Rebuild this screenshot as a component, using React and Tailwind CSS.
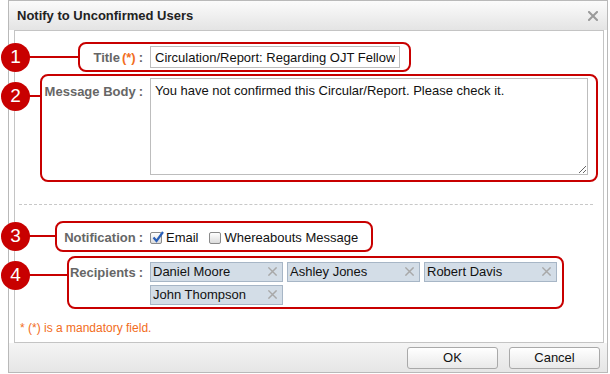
import React from 'react'

const recipients = ['Daniel Moore', 'Ashley Jones', 'Robert Davis', 'John Thompson']

function CloseIcon({ size = 10, color = '#9a9a9a', width = 2 }) {
  return (
    <svg width={size} height={size} viewBox="0 0 10 10">
      <path d="M1 1L9 9M9 1L1 9" stroke={color} strokeWidth={width} strokeLinecap="square" />
    </svg>
  )
}

function Tag({ name }) {
  return (
    <div className="flex h-[20px] w-[133px] items-center justify-between border border-[#a7b6c6] bg-[#d3dde7] pl-[2px] pr-[5px] text-[13px] text-[#111]">
      <span>{name}</span>
      <CloseIcon size={9} color="#a8a8a8" width={1.6} />
    </div>
  )
}

function Checkbox({ checked }) {
  return (
    <span className="relative inline-flex h-[12px] w-[12px] items-center justify-center rounded-[2px] border border-[#8a8a8a] bg-gradient-to-b from-white to-[#dcdcdc]">
      {checked && (
        <svg className="absolute -top-[3px] left-[0px]" width="14" height="14" viewBox="0 0 14 14">
          <path d="M2.5 7.5L5.5 11L12 2" fill="none" stroke="#2a5fb8" strokeWidth="2.2" />
        </svg>
      )}
    </span>
  )
}

function Label({ children, className = '' }) {
  return (
    <div className={`text-right text-[13px] font-bold text-[#666] ${className}`}>
      {children}
      <span className="ml-[3px]">:</span>
    </div>
  )
}

function Marker({ n, top }) {
  return (
    <div
      className="absolute left-[1px] flex h-[29px] w-[29px] items-center justify-center rounded-full bg-[#c80000] text-[19px] text-white"
      style={{ top }}
    >
      {n}
    </div>
  )
}

export default function App() {
  return (
    <div className="relative h-[374px] w-[610px] overflow-hidden bg-white [font-family:'Liberation_Sans',Arial,sans-serif]">
      {/* Dialog */}
      <div className="ml-[8px] flex h-[373px] w-[600px] flex-col border border-[#b9b9b9] bg-white">
        <div className="flex h-[29px] items-center justify-between bg-gradient-to-b from-[#fbfbfb] to-[#e4e4e4] pl-[8px] pr-[9px]">
          <span className="text-[13px] font-bold text-[#222]">Notify to Unconfirmed Users</span>
          <CloseIcon size={10} />
        </div>

        <div className="ml-[5px] flex h-[313px] w-[590px] flex-col border border-[#c4c4c4] bg-white pl-[4px] pt-[15px]">
          <div className="grid grid-cols-[124px_1fr] gap-x-[7px] gap-y-[10px]">
            <Label className="pt-[2px]">
              Title<span className="ml-[2px] text-[#f26d21]">(*)</span>
            </Label>
            <input
              readOnly
              value="Circulation/Report: Regarding OJT Fellows"
              className="h-[22px] w-[250px] border border-[#bdbdbd] px-[4px] text-[13px] text-[#111] outline-none"
            />

            <Label className="pt-[4px]">Message Body</Label>
            <textarea
              readOnly
              value="You have not confirmed this Circular/Report. Please check it."
              className="h-[97px] w-[438px] resize border border-[#bdbdbd] px-[4px] pt-[2px] text-[13px] text-[#111] outline-none"
            />
          </div>

          <div className="mr-[10px] mt-[29px] border-t border-dashed border-[#c8c8c8]" />

          <div className="mt-[23px] grid grid-cols-[124px_1fr] gap-x-[7px] gap-y-[17px]">
            <Label>Notification</Label>
            <div className="flex items-center text-[13px] text-[#111]">
              <Checkbox checked />
              <span className="ml-[4px]">Email</span>
              <span className="ml-[10px] flex"><Checkbox /></span>
              <span className="ml-[4px]">Whereabouts Message</span>
            </div>

            <Label className="-mt-[2px]">Recipients</Label>
            <div className="-mt-[3px] flex w-[411px] flex-wrap gap-x-[4px] gap-y-[3px]">
              {recipients.map((r) => (
                <Tag key={r} name={r} />
              ))}
            </div>
          </div>

          <div className="mt-[14px] pl-[1px] text-[12px] text-[#f26d21]">* (*) is a mandatory field.</div>
        </div>

        <div className="flex flex-1 items-center justify-end gap-[11px] bg-gradient-to-b from-[#f4f4f4] to-[#e6e6e6] pr-[7px]">
          <button className="h-[22px] w-[91px] rounded-[3px] border border-[#a9a9a9] bg-gradient-to-b from-white to-[#e9e9e9] text-[13px] text-[#111]">
            OK
          </button>
          <button className="h-[22px] w-[91px] rounded-[3px] border border-[#a9a9a9] bg-gradient-to-b from-white to-[#e9e9e9] text-[13px] text-[#111]">
            Cancel
          </button>
        </div>
      </div>

      {/* Annotations */}
      <div className="absolute left-[78px] top-[42px] h-[30px] w-[333px] rounded-[8px] border-2 border-[#c80000]" />
      <div className="absolute left-[40px] top-[74px] h-[108px] w-[558px] rounded-[8px] border-2 border-[#c80000]" />
      <div className="absolute left-[55px] top-[221px] h-[31px] w-[318px] rounded-[8px] border-2 border-[#c80000]" />
      <div className="absolute left-[67px] top-[256px] h-[53px] w-[497px] rounded-[8px] border-2 border-[#c80000]" />

      <div className="absolute left-[28px] top-[56px] h-[2px] w-[51px] bg-[#c80000]" />
      <div className="absolute left-[28px] top-[95px] h-[2px] w-[13px] bg-[#c80000]" />
      <div className="absolute left-[28px] top-[235px] h-[2px] w-[28px] bg-[#c80000]" />
      <div className="absolute left-[28px] top-[274px] h-[2px] w-[40px] bg-[#c80000]" />

      <Marker n="1" top={43} />
      <Marker n="2" top={82} />
      <Marker n="3" top={222} />
      <Marker n="4" top={261} />
    </div>
  )
}
